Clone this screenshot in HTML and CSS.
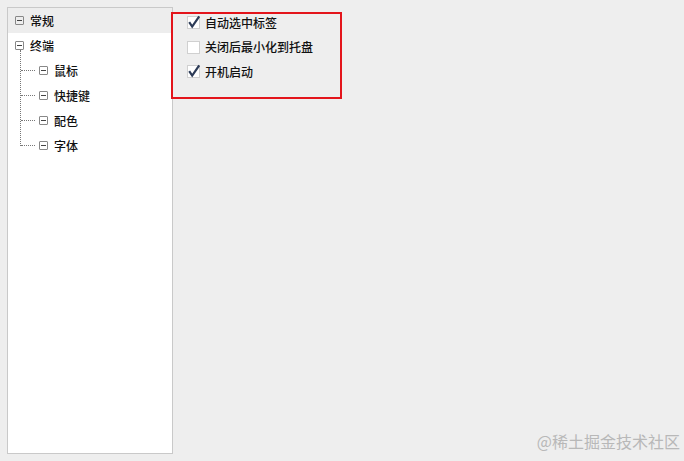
FILE: index.html
```html
<!DOCTYPE html>
<html lang="zh-CN">
<head>
    <meta charset="UTF-8">
    <title>设置</title>
    <link rel="stylesheet" href="styles.css">
</head>
<body>

<div class="window">
    <ul class="tree">
        <li class="tree-item selected">
            <span class="toggle"></span><span class="label">常规</span>
        </li>
        <li class="tree-item">
            <span class="toggle"></span><span class="label">终端</span>
        </li>
        <li class="tree-children">
            <div class="tree-item child">
                <span class="branch"></span><span class="toggle"></span><span class="label">鼠标</span>
            </div>
            <div class="tree-item child">
                <span class="branch"></span><span class="toggle"></span><span class="label">快捷键</span>
            </div>
            <div class="tree-item child">
                <span class="branch"></span><span class="toggle"></span><span class="label">配色</span>
            </div>
            <div class="tree-item child last">
                <span class="branch"></span><span class="toggle"></span><span class="label">字体</span>
            </div>
        </li>
    </ul>

    <div class="page">
        <div class="options">
            <label class="option">
                <span class="check checked">
                    <svg width="14" height="14" viewBox="0 0 14 14"><rect x="0.5" y="1.5" width="12" height="12" fill="#fff" stroke="#d0d0d0"/><path d="M2.2 7.2 L5.2 11.6 L12.2 1.4" fill="none" stroke="#2c3b57" stroke-width="2.2"/></svg>
                </span>
                自动选中标签
            </label>
            <label class="option">
                <span class="check">
                    <svg width="14" height="14" viewBox="0 0 14 14"><rect x="0.5" y="1.5" width="12" height="12" fill="#fff" stroke="#d0d0d0"/></svg>
                </span>
                关闭后最小化到托盘
            </label>
            <label class="option">
                <span class="check checked">
                    <svg width="14" height="14" viewBox="0 0 14 14"><rect x="0.5" y="1.5" width="12" height="12" fill="#fff" stroke="#d0d0d0"/><path d="M2.2 7.2 L5.2 11.6 L12.2 1.4" fill="none" stroke="#2c3b57" stroke-width="2.2"/></svg>
                </span>
                开机启动
            </label>
            <div class="highlight"></div>
        </div>
    </div>
</div>

<div class="watermark">@稀土掘金技术社区</div>

</body>
</html>
```

FILE: styles.css
```css
body {
    margin: 0;
    height: 461px;
    background-color: #eeeeee;
    font-family: "Noto Sans CJK SC", "Microsoft YaHei", sans-serif;
    font-size: 12px;
    color: #111;
    position: relative;
    overflow: hidden;
}

.window {
    display: flex;
    padding: 7px 0 0 7px;
}

/* left tree */
.tree {
    list-style: none;
    margin: 0;
    padding: 0;
    width: 164px;
    height: 445px;
    background-color: #fff;
    border: 1px solid #c9c9c9;
    box-sizing: content-box;
}

.tree-item {
    display: flex;
    align-items: center;
    height: 25px;
    padding-left: 7px;
}

.tree-item.selected {
    background-color: #ededed;
}

.tree-children {
    position: relative;
}

.tree-children::before {
    content: '';
    position: absolute;
    left: 12px;
    top: -8px;
    height: 96px;
    border-left: 1px dotted #777;
}

.tree-item.child {
    padding-left: 13px;
}

.branch {
    width: 14px;
    margin-right: 4px;
    border-top: 1px dotted #777;
}

.toggle {
    width: 7px;
    height: 7px;
    border: 1px solid #888;
    border-radius: 1px;
    margin-right: 6px;
    position: relative;
}

.toggle::after {
    content: '';
    position: absolute;
    left: 1px;
    right: 1px;
    top: 3px;
    border-top: 1px solid #444;
}

.label {
    font-weight: 500;
    line-height: 25px;
}

/* right page */
.page {
    flex: 1;
    padding: 3px 0 0 14px;
}

.options {
    position: relative;
    width: 171px;
}

.option {
    display: flex;
    align-items: center;
    height: 24.5px;
    font-weight: 500;
}

.check {
    display: flex;
    width: 14px;
    height: 14px;
    margin-right: 4px;
}

.highlight {
    position: absolute;
    left: -16px;
    top: 2px;
    width: 167px;
    height: 83px;
    border: 2px solid #e3141b;
}

.watermark {
    position: absolute;
    right: 4px;
    bottom: 8px;
    font-size: 16px;
    color: #b8b8b8;
}
```
